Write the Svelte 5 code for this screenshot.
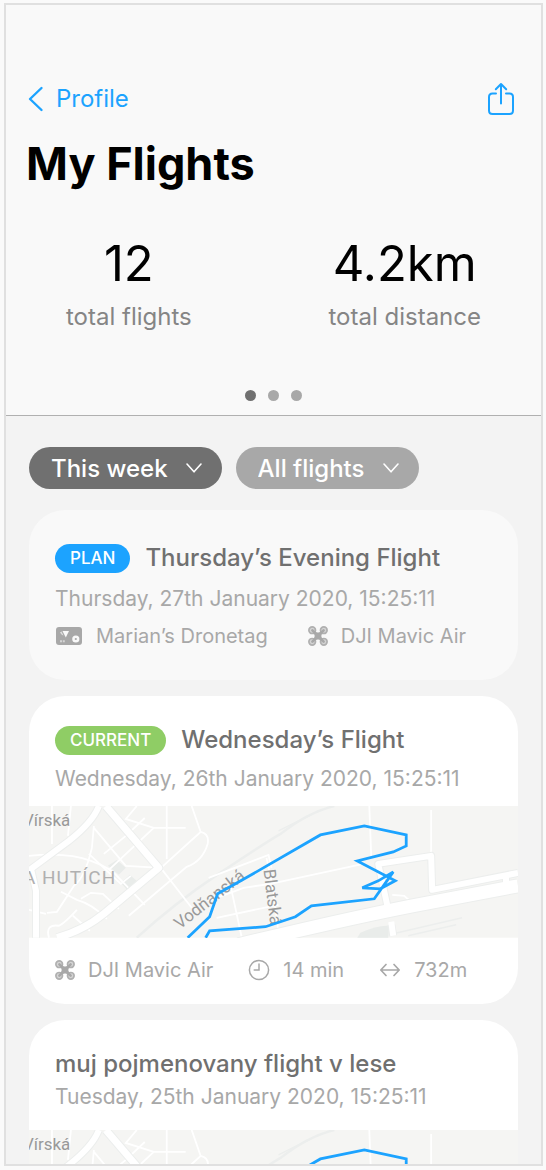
<script>
  const stats = [
    { value: '12', label: 'total flights' },
    { value: '4.2km', label: 'total distance' }
  ];

  const filters = [
    { id: 'period', label: 'Period', active: true, options: ['This week', 'Today'] },
    { id: 'kind', label: 'Flight type', active: false, options: ['All flights', 'Planned'] }
  ];

  const flights = [
    {
      badge: 'Plan',
      title: 'Thursday’s Evening Flight',
      date: 'Thursday, 27th January 2020, 15:25:11',
      map: false,
      details: [
        { icon: 'tag', text: 'Marian’s Dronetag' },
        { icon: 'drone', text: 'DJI Mavic Air' }
      ]
    },
    {
      badge: 'Current',
      title: 'Wednesday’s Flight',
      date: 'Wednesday, 26th January 2020, 15:25:11',
      map: true,
      details: [
        { icon: 'drone', text: 'DJI Mavic Air' },
        { icon: 'clock', text: '14 min' },
        { icon: 'distance', text: '732m' }
      ]
    },
    {
      badge: '',
      title: 'muj pojmenovany flight v lese',
      date: 'Tuesday, 25th January 2020, 15:25:11',
      map: true,
      details: []
    }
  ];

  let page = $state(0);
</script>

{#snippet icon(name)}
  {#if name === 'tag'}
    <svg class="icon" width="28" height="22" viewBox="0 0 28 22" aria-hidden="true">
      <rect x="1" y="2" width="26" height="18" rx="3" fill="#a8a8a8" />
      <path d="M7.5 6H14L10.8 12.4Z" fill="#f9f9f9" />
      <path d="M5 7.5L6.5 6.5L8.5 10.5L7 10Z" fill="#dedede" />
      <path d="M5 15.2h2v2H5zM7.8 15.2h2v2h-2z" fill="#d5d5d5" />
      <circle cx="20.8" cy="14" r="3.6" fill="#f9f9f9" />
      <circle cx="20.8" cy="14" r="1.1" fill="#a8a8a8" />
    </svg>
  {:else if name === 'drone'}
    <svg class="icon" width="20" height="20" viewBox="0 0 20 20" aria-hidden="true">
      <g fill="#d4d4d4" stroke="#b0b0b0" stroke-width="1.7">
        <circle cx="4.2" cy="4.2" r="3.3" />
        <circle cx="15.8" cy="4.2" r="3.3" />
        <circle cx="4.2" cy="15.8" r="3.3" />
        <circle cx="15.8" cy="15.8" r="3.3" />
      </g>
      <path d="M4.4 4.4L8 8M15.6 4.4L12 8M4.4 15.6L8 12M15.6 15.6L12 12" stroke="#a8a8a8" stroke-width="2.6" stroke-linecap="round" />
      <path d="M6.4 5.6Q10 7.4 13.6 5.6L13.9 7Q12.8 10 13.9 13L13.6 14.4Q10 12.6 6.4 14.4L6.1 13Q7.2 10 6.1 7Z" fill="#a8a8a8" />
    </svg>
  {:else if name === 'clock'}
    <svg class="icon" width="22" height="22" viewBox="0 0 22 22" fill="none" stroke="#a8a8a8" stroke-width="1.5" stroke-linecap="round" aria-hidden="true">
      <circle cx="11" cy="11" r="9.6" />
      <path d="M11 5V11H6.2" />
    </svg>
  {:else}
    <svg class="icon" width="22" height="20" viewBox="0 0 22 20" fill="none" stroke="#a8a8a8" stroke-width="1.7" stroke-linecap="round" stroke-linejoin="round" aria-hidden="true">
      <path d="M2 10H20M7 4.5L1.8 10L7 15.5M15 4.5L20.2 10L15 15.5" />
    </svg>
  {/if}
{/snippet}

{#snippet flightMap()}
  <svg class="map" viewBox="0 0 490 132" role="img" aria-label="Flight path">
    <rect width="490" height="132" fill="#f5f5f3" />
    <g fill="#e9ecea">
      <path d="M79 60L88 54L97 62L90 69Z" />
      <path d="M92 77L101 69L109 76L99 85Z" />
      <path d="M332 127Q350 119 361 120L360 132H329Z" />
    </g>
    <g fill="none" stroke="#eceeed" stroke-width="2.5">
      <path d="M108 132Q145 98 190 68T252 28Q280 6 306 0" />
      <path d="M250 25L284 8" stroke-width="1.5" />
      <path d="M365 128L434 112M380 130L428 119" stroke-width="1.5" />
    </g>
    <g fill="none" stroke="#ffffff" stroke-width="1.8">
      <path d="M23 0V38M42 0L39 30M0 50Q38 46 62 55Q82 62 90 72L116 99" />
      <path d="M108 0L97 13L125 22L157 22M125 22L80 64M116 12L97 30L75 48" />
      <path d="M138 0V53M163 0L172 26L130 64M172 26Q181 28 179 38Q174 55 158 61L100 110" />
      <path d="M65 20L63 42Q56 72 45 80L28 106L18 107M65 22L97 60L132 62L163 102" />
      <path d="M32 86L48 94Q63 98 78 113M52 93L62 87L74 88L90 103M20 132Q16 118 30 120Q36 117 48 104M44 110L61 125" />
      <path d="M60 48L92 78L102 70M180 95L215 82L242 78L335 58M188 112L250 99M202 80L213 131M238 52L245 85L250 128" />
      <path d="M180 72L240 49L243 62M341 0L343 52M403 4V50M404 90V98M364 89L376 90L386 99M0 104L17 108" />
    </g>
    <g fill="none" stroke="#eceeed" stroke-linejoin="round">
      <path d="M70 0Q64 16 40 35L2 63L7 85V132" stroke-width="8" />
      <path d="M77 0L130 62L75 108Q54 125 28 132" stroke-width="9" />
      <path d="M210 139Q330 110 400 97L490 80" stroke-width="15" />
      <path d="M360 104L350 58L403 50L404 84L490 67M478 70V86" stroke-width="8" />
      <path d="M363 119L365 130" stroke-width="8" />
    </g>
    <g fill="none" stroke="#ffffff" stroke-linejoin="round">
      <path d="M70 0Q64 16 40 35L2 63L7 85V132" stroke-width="6" />
      <path d="M77 0L130 62L75 108Q54 125 28 132" stroke-width="7" />
      <path d="M360 104L350 58L403 50L404 84L490 67M478 70V86" stroke-width="6" />
      <path d="M363 116L365 130" stroke-width="6" />
      <path d="M210 139Q330 110 400 97L490 80" stroke-width="13" />
    </g>
    <g class="map-label">
      <text x="-6" y="20">Vírská</text>
      <text class="district" x="-6" y="78">A HUTÍCH</text>
      <text transform="translate(151 124) rotate(-38)">Vodňanská</text>
      <text transform="translate(235 64) rotate(83)">Blatská</text>
    </g>
    <path
      d="M159 132L181 111L189 88L214 74L292 29L336 20L378 29V40L365 46L329 55L367 75L352 83L334 82L350 75L365 66L346 93L283 100L267 111L237 121L181 125L177 132"
      fill="none" stroke="#1ca3ff" stroke-width="2.8" stroke-linejoin="miter" />
  </svg>
{/snippet}

<div class="frame">
  <header>
    <nav>
      <a href="#profile">
        <svg width="16" height="26" viewBox="0 0 16 26" fill="none" stroke="currentColor" stroke-width="2.4" stroke-linecap="round" stroke-linejoin="round" aria-hidden="true">
          <path d="M13.5 2L2 13L13.5 24" />
        </svg>
        Profile
      </a>
      <button class="share" aria-label="Share">
        <svg width="28" height="34" viewBox="0 0 28 34" fill="none" stroke="currentColor" stroke-width="2" stroke-linecap="round" stroke-linejoin="round" aria-hidden="true">
          <path d="M9 11.5H5.5Q2 11.5 2 15V28.5Q2 32 5.5 32H22.5Q26 32 26 28.5V15Q26 11.5 22.5 11.5H19" />
          <path d="M14 21.5V2.5M8.8 7.3L14 2L19.2 7.3" />
        </svg>
      </button>
    </nav>
    <h1>My Flights</h1>
    <dl>
      {#each stats as stat}
        <div>
          <dd>{stat.value}</dd>
          <dt>{stat.label}</dt>
        </div>
      {/each}
    </dl>
    <div class="dots">
      {#each [0, 1, 2] as i}
        <button class:current={page === i} aria-label="Page {i + 1}" onclick={() => (page = i)}></button>
      {/each}
    </div>
  </header>

  <main>
    <div class="filters">
      {#each filters as filter}
        <label class="filter" class:active={filter.active} for={filter.id}>
          <select id={filter.id} aria-label={filter.label}>
            {#each filter.options as option}
              <option>{option}</option>
            {/each}
          </select>
          <svg width="18" height="12" viewBox="0 0 18 12" fill="none" stroke="#ffffff" stroke-width="1.6" stroke-linecap="round" stroke-linejoin="round" aria-hidden="true">
            <path d="M2 2L9 9.8L16 2" />
          </svg>
        </label>
      {/each}
    </div>

    {#each flights as flight}
      <article class:planned={flight.badge === 'Plan'} class:plain={!flight.badge}>
        <div class="summary">
          <div class="heading">
            {#if flight.badge}
              <span class="badge" class:green={flight.badge === 'Current'}>{flight.badge}</span>
            {/if}
            <h2>{flight.title}</h2>
          </div>
          <p>{flight.date}</p>
        </div>
        {#if flight.map}
          {@render flightMap()}
        {/if}
        {#if flight.details.length}
          <ul>
            {#each flight.details as detail}
              <li>{@render icon(detail.icon)}{detail.text}</li>
            {/each}
          </ul>
        {/if}
      </article>
    {/each}
  </main>
</div>

<style>
  :global(body) {
    margin: 0;
    background: #fafafa;
  }

  .frame {
    box-sizing: border-box;
    height: calc(100vh - 7px);
    margin: 3px 3px 4px 4px;
    border: 2px solid #e0e0e0;
    display: flex;
    flex-direction: column;
    overflow: hidden;
    background: #f3f3f3;
    font-family: Inter, "Liberation Sans", sans-serif;
    color: #707070;
  }

  h1, h2, p, dl, dd, ul {
    margin: 0;
    padding: 0;
  }

  button {
    border: 0;
    padding: 0;
    background: none;
    cursor: pointer;
  }

  svg {
    display: block;
    flex: none;
  }

  header {
    flex: none;
    padding-top: 76px;
    background: #f9f9f9;
    border-bottom: 1px solid #b0b0b0;
  }

  nav {
    display: flex;
    justify-content: space-between;
    align-items: center;
    height: 36px;
    padding: 0 26px 0 22px;
  }

  nav a {
    display: flex;
    align-items: center;
    gap: 12px;
    font-size: 24px;
    line-height: 30px;
    color: #1ca3ff;
    text-decoration: none;
  }

  .share {
    color: #1ca3ff;
  }

  h1 {
    padding: 19px 20px 0;
    font-size: 45px;
    line-height: 56px;
    font-weight: 700;
    color: #000000;
  }

  dl {
    display: flex;
    justify-content: space-between;
    padding: 42px 60px 0;
    text-align: center;
  }

  dl div {
    display: flex;
    flex-direction: column;
  }

  dd {
    font-size: 49px;
    line-height: 60px;
    color: #000000;
  }

  dt {
    padding-top: 8px;
    font-size: 24px;
    line-height: 30px;
    color: #858585;
  }

  .dots {
    display: flex;
    justify-content: center;
    gap: 12px;
    padding: 58px 0 14px;
  }

  .dots button {
    width: 11px;
    height: 11px;
    border-radius: 50%;
    background: #a8a8a8;
  }

  .dots .current {
    background: #707070;
  }

  main {
    flex: 1;
    min-height: 0;
    overflow: hidden;
    display: flex;
    flex-direction: column;
    gap: 16px;
    padding: 31px 23px 0;
  }

  .filters {
    display: flex;
    gap: 14px;
    padding-bottom: 5px;
  }

  .filter {
    display: grid;
    align-items: center;
    border-radius: 21px;
    background: #a8a8a8;
  }

  .filter.active {
    background: #707070;
  }

  .filter select {
    grid-area: 1 / 1;
    appearance: none;
    field-sizing: content;
    box-sizing: border-box;
    height: 42px;
    margin: 0;
    padding: 2px 54px 0 22px;
    border: 0;
    background: none;
    font-family: inherit;
    font-size: 24px;
    line-height: 30px;
    font-weight: 500;
    color: #ffffff;
  }

  .filter svg {
    grid-area: 1 / 1;
    justify-self: end;
    margin-right: 19px;
    pointer-events: none;
  }

  article {
    flex: none;
    overflow: hidden;
    border-radius: 36px;
    background: #ffffff;
  }

  .planned {
    background: #f9f9f9;
  }

  .summary {
    padding: 29px 26px 12px;
  }

  .planned .summary {
    padding: 33px 26px 0;
  }

  .plain .summary {
    padding-bottom: 18px;
  }

  .heading {
    display: flex;
    align-items: center;
    gap: 15px;
    min-height: 30px;
  }

  .badge {
    padding: 0 15px;
    border-radius: 15px;
    background: #1ca3ff;
    font-size: 17px;
    line-height: 29px;
    font-weight: 500;
    text-transform: uppercase;
    color: #ffffff;
  }

  .badge.green {
    background: #8fcd65;
  }

  h2 {
    font-size: 24px;
    line-height: 30px;
    font-weight: 500;
    white-space: nowrap;
  }

  p {
    padding-top: 9px;
    font-size: 21px;
    line-height: 30px;
    color: #a8a8a8;
    white-space: nowrap;
  }

  .planned p {
    padding-top: 11px;
  }

  .plain p {
    padding-top: 3px;
  }

  .map {
    width: 100%;
    height: auto;
  }

  .map-label {
    font-family: Roboto, "Liberation Sans", sans-serif;
    font-size: 17px;
    fill: #999999;
  }

  .district {
    font-size: 19px;
    letter-spacing: 1px;
    fill: #b0b0b0;
  }

  ul {
    display: flex;
    gap: 35px;
    padding: 17px 26px 19px;
    list-style: none;
  }

  .planned ul {
    gap: 40px;
    padding: 7px 26px 29px;
  }

  li {
    display: flex;
    align-items: center;
    gap: 13px;
    font-size: 20px;
    line-height: 30px;
    color: #a8a8a8;
    white-space: nowrap;
  }
</style>
